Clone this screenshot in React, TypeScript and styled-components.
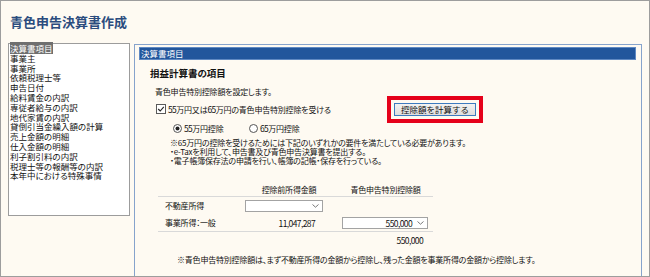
import * as React from "react";
import styled, {createGlobalStyle} from "styled-components";

const GlobalStyle = createGlobalStyle`
  body {
    margin: 0;
    background: #fefaf2;
  }
`

const menuItems = [
    '決算書項目', '事業主', '事業所', '依頼税理士等', '申告日付', '給料賃金の内訳',
    '専従者給与の内訳', '地代家賃の内訳', '貸倒引当金繰入額の計算', '売上金額の明細',
    '仕入金額の明細', '利子割引料の内訳', '税理士等の報酬等の内訳', '本年中における特殊事情'
]

const notes = [
    '※65万円の控除を受けるためには下記のいずれかの要件を満たしている必要があります。',
    '・e-Taxを利用して、申告書及び青色申告決算書を提出する。',
    '・電子帳簿保存法の申請を行い、帳簿の記帳・保存を行っている。'
]

const Chevron = () => (
    <svg width="7" height="4" viewBox="0 0 7 4">
        <path d="M0.5 0.5 L3.5 3.2 L6.5 0.5" fill="none" stroke="#6a6a6a" strokeWidth="0.9"/>
    </svg>
)

const CheckIcon = () => (
    <svg width="10" height="10" viewBox="0 0 10 10">
        <rect x="0.5" y="0.5" width="9" height="9" fill="#fff" stroke="#5a5a5a"/>
        <path d="M2.2 5 L4.2 7 L7.8 2.8" fill="none" stroke="#222" strokeWidth="1.1"/>
    </svg>
)

const RadioIcon = ({on}: { on?: boolean }) => (
    <svg width="9" height="9" viewBox="0 0 9 9">
        <circle cx="4.5" cy="4.5" r="4" fill="#fff" stroke="#555"/>
        {on && <circle cx="4.5" cy="4.5" r="2" fill="#222"/>}
    </svg>
)

const App: React.FunctionComponent = () => {
    return (
        <Frame>
            <GlobalStyle/>
            <Title>青色申告決算書作成</Title>
            <Body>
                <ListBox>
                    {menuItems.map((m, i) => (
                        <ListItem key={m}><span className={i === 0 ? 'selected' : ''}>{m}</span></ListItem>
                    ))}
                </ListBox>
                <Panel>
                    <PanelBar>決算書項目</PanelBar>
                    <Content>
                        <SectionTitle>損益計算書の項目</SectionTitle>
                        <Desc>青色申告特別控除額を設定します。</Desc>
                        <CheckRow>
                            <CheckIcon/>
                            <CheckLabel><Num>55</Num>万円又は<Num>65</Num>万円の青色申告特別控除を受ける</CheckLabel>
                            <RedFrame>
                                <CalcButton>控除額を計算する</CalcButton>
                            </RedFrame>
                        </CheckRow>
                        <RadioRow>
                            <RadioOpt $width={76}><RadioIcon on/><span><Num>55</Num>万円控除</span></RadioOpt>
                            <RadioOpt $width={70}><RadioIcon/><span><Num>65</Num>万円控除</span></RadioOpt>
                        </RadioRow>
                        <Notes>
                            {notes.map(n => <div key={n}>{n}</div>)}
                        </Notes>
                        <Table>
                            <TableRow $height={15} $line>
                                <Cell/>
                                <Cell $align="center">控除前所得金額</Cell>
                                <Cell $align="center">青色申告特別控除額</Cell>
                            </TableRow>
                            <TableRow $height={17}>
                                <Cell $pad="0 0 0 7px">不動産所得</Cell>
                                <Cell $pad="0 0 0 5px">
                                    <Select $width={78}><Chevron/></Select>
                                </Cell>
                                <Cell/>
                            </TableRow>
                            <TableRow $height={18} $line>
                                <Cell $pad="0 0 0 7px">事業所得：一般</Cell>
                                <Cell $align="right" $pad="0 23px 0 0"><Num>11,047,287</Num></Cell>
                                <Cell $pad="0 0 0 4px">
                                    <Select $width={86}><Num>550,000</Num><Chevron/></Select>
                                </Cell>
                            </TableRow>
                            <TableRow $height={16}>
                                <Cell/>
                                <Cell/>
                                <Cell $align="right" $pad="0 10px 0 0"><Num>550,000</Num></Cell>
                            </TableRow>
                        </Table>
                        <Footer>※青色申告特別控除額は、まず不動産所得の金額から控除し、残った金額を事業所得の金額から控除します。</Footer>
                    </Content>
                </Panel>
            </Body>
        </Frame>
    )
}

const Frame = styled.div`
  width: 650px;
  height: 277px;
  box-sizing: border-box;
  border: 1px solid #9d9d9d;
  background: #fefaf2;
  display: flex;
  flex-direction: column;
  overflow: hidden;
  font-family: "Noto Sans CJK JP", sans-serif;
  font-size: 8.5px;
  font-feature-settings: "palt";
  color: #111;
`

const Title = styled.div`
  padding: 13px 0 0 9px;
  font-size: 13px;
  line-height: 16px;
  font-weight: bold;
  color: #2b4c7e;
  font-feature-settings: normal;
`

const Body = styled.div`
  display: flex;
  align-items: flex-start;
  flex: 1;
  min-height: 0;
  margin-top: 13px;
  padding-left: 7px;
`

const ListBox = styled.div`
  width: 122px;
  height: 173px;
  box-sizing: border-box;
  border: 1px solid #9c9c9c;
  background: #fff;
  padding: 0 1px;
  flex-shrink: 0;
`

const ListItem = styled.div`
  line-height: 9.8px;
  white-space: nowrap;

  > .selected {
    background: #6f6f6f;
    color: #fff;
  }
`

const Panel = styled.div`
  width: 508px;
  box-sizing: border-box;
  align-self: stretch;
  margin: 1px 0 0 4px;
  border: 1px solid #86a3cc;
  border-bottom: none;
  padding: 2px 5px 0 4px;
`

const PanelBar = styled.div`
  height: 13px;
  box-sizing: border-box;
  background: #22569c;
  border: 1px solid #6089c2;
  color: #fff;
  line-height: 11px;
  padding-left: 1px;
`

const Content = styled.div`
  padding-left: 11px;
  font-size: 8px;
  letter-spacing: -0.2px;
`

const SectionTitle = styled.div`
  margin-top: 7px;
  line-height: 12px;
  font-size: 9.5px;
  font-weight: bold;
  letter-spacing: 0;
`

const Desc = styled.div`
  margin-top: 7px;
  line-height: 12px;
  padding-left: 5px;
`

const CheckRow = styled.div`
  margin-top: 4px;
  height: 14px;
  display: flex;
  align-items: center;
  padding-left: 6px;

  > svg {
    flex-shrink: 0;
    margin-right: 2px;
  }
`

const CheckLabel = styled.span`
  width: 219px;
  flex-shrink: 0;
  white-space: nowrap;
`

const RedFrame = styled.div`
  border: 4px solid #e5001a;
  padding: 3px;
  flex-shrink: 0;
  display: flex;
`

const CalcButton = styled.button`
  width: 82px;
  height: 13px;
  padding: 0;
  border: 1px solid #3d7bbf;
  background: linear-gradient(#f2f2f2, #dedede);
  font-family: inherit;
  font-size: 8.5px;
  line-height: 11px;
  color: #111;
`

const RadioRow = styled.div`
  margin-top: 5px;
  height: 14px;
  display: flex;
  align-items: center;
  padding-left: 23px;
`

const RadioOpt = styled.label<{ $width: number }>`
  width: ${p => p.$width}px;
  display: flex;
  align-items: center;
  gap: 2px;
  white-space: nowrap;
`

const Notes = styled.div`
  margin-top: 3px;
  padding-left: 20px;
  line-height: 9px;
  white-space: nowrap;
`

const Table = styled.div`
  margin: 17px 0 0 8px;
  width: 275px;
`

const TableRow = styled.div<{ $height: number, $line?: boolean }>`
  display: grid;
  grid-template-columns: 82px 98px 95px;
  align-items: center;
  height: ${p => p.$height}px;
  box-sizing: border-box;
  border-bottom: ${p => p.$line ? '1px solid #d9d9d9' : 'none'};
`

const Cell = styled.div<{ $align?: 'left' | 'center' | 'right', $pad?: string }>`
  text-align: ${p => p.$align || 'left'};
  padding: ${p => p.$pad || '0'};
  white-space: nowrap;
`

const Select = styled.div<{ $width: number }>`
  width: ${p => p.$width}px;
  height: 12px;
  box-sizing: border-box;
  border: 1px solid #a3a3a3;
  background: #fff;
  display: flex;
  align-items: center;
  justify-content: flex-end;
  gap: 5px;
  padding-right: 3px;
`

const Num = styled.span`
  font-size: 8.5px;
  letter-spacing: -0.6px;
`

const Footer = styled.div`
  margin-top: 6px;
  padding-left: 27px;
  line-height: 12px;
  white-space: nowrap;
`

export default App
